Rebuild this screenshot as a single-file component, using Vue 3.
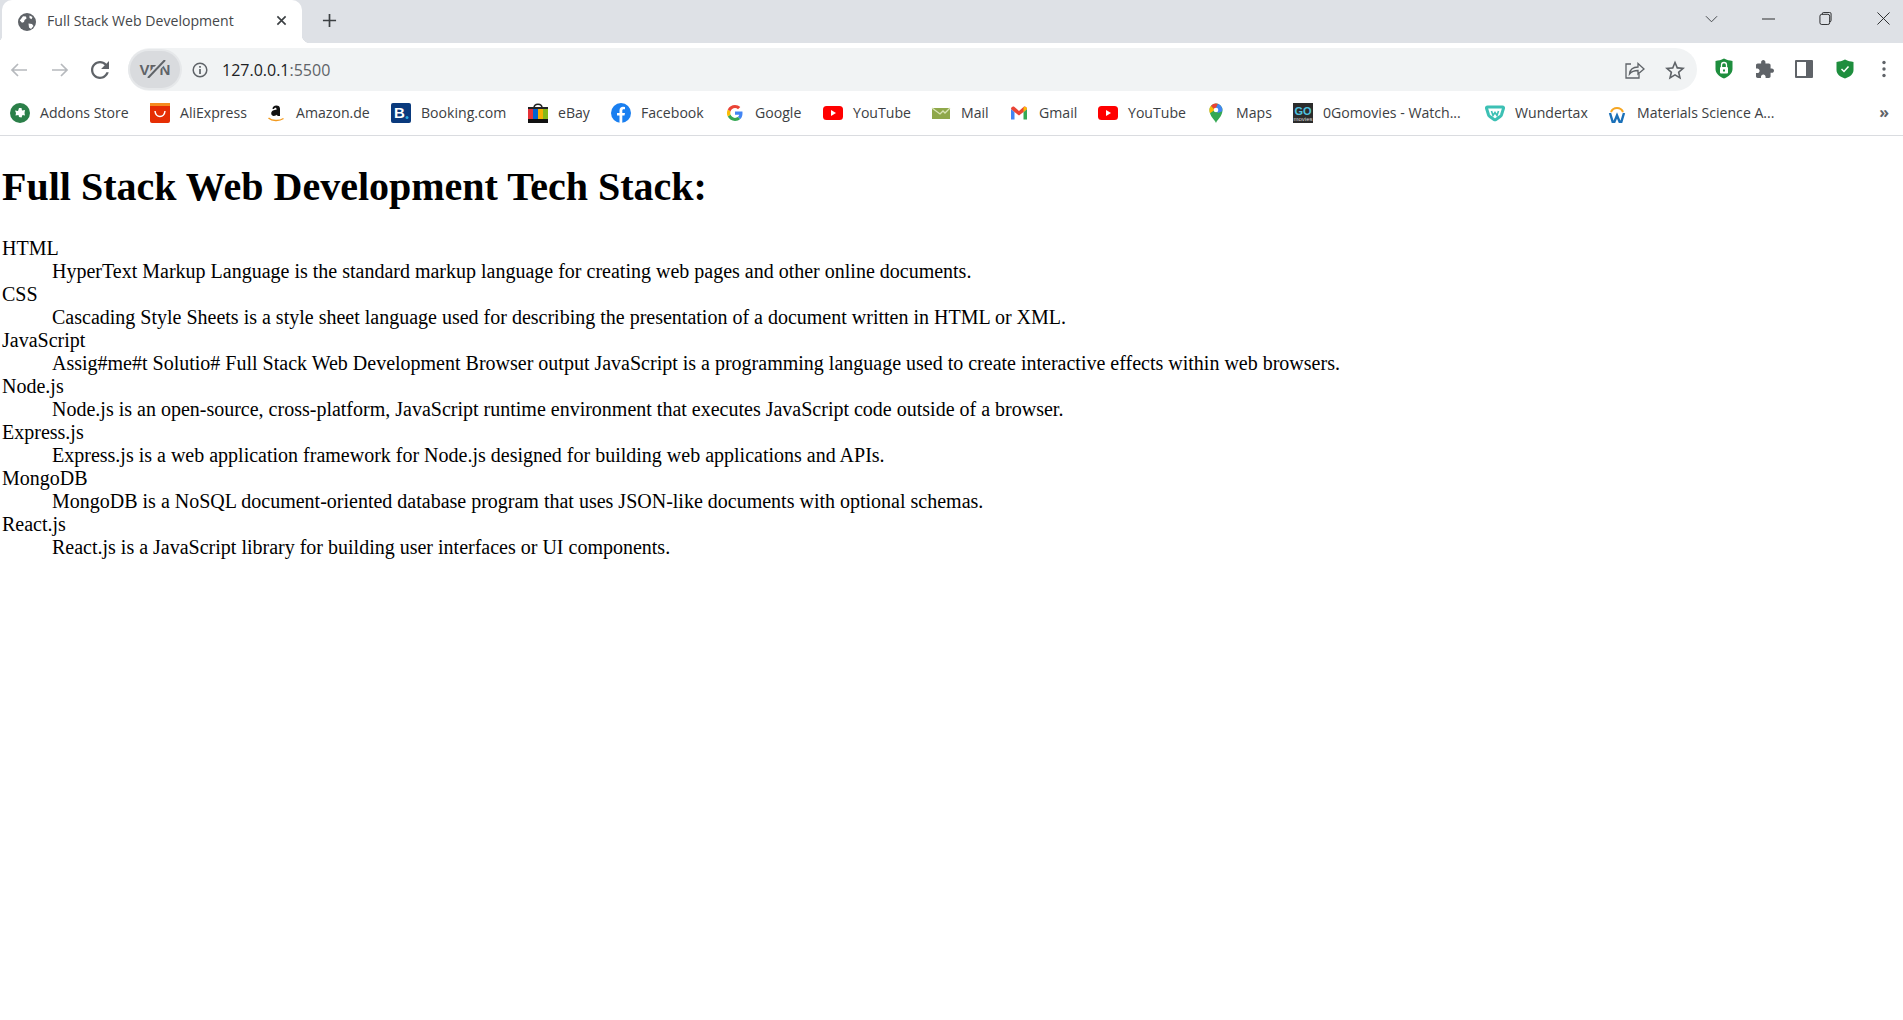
<script setup>
const bookmarks = [
  { icon: 'addons', label: 'Addons Store', width: 140 },
  { icon: 'ali', label: 'AliExpress', width: 116 },
  { icon: 'amazon', label: 'Amazon.de', width: 125 },
  { icon: 'booking', label: 'Booking.com', width: 137 },
  { icon: 'ebay', label: 'eBay', width: 83 },
  { icon: 'facebook', label: 'Facebook', width: 114 },
  { icon: 'google', label: 'Google', width: 98 },
  { icon: 'youtube', label: 'YouTube', width: 108 },
  { icon: 'mail', label: 'Mail', width: 78 },
  { icon: 'gmail', label: 'Gmail', width: 89 },
  { icon: 'youtube', label: 'YouTube', width: 108 },
  { icon: 'maps', label: 'Maps', width: 87 },
  { icon: 'go', label: '0Gomovies - Watch...', width: 192 },
  { icon: 'wunder', label: 'Wundertax', width: 122 },
  { icon: 'work', label: 'Materials Science A...', width: 172 },
]
const terms = [
  ['HTML', 'HyperText Markup Language is the standard markup language for creating web pages and other online documents.'],
  ['CSS', 'Cascading Style Sheets is a style sheet language used for describing the presentation of a document written in HTML or XML.'],
  ['JavaScript', 'Assig#me#t Solutio# Full Stack Web Development Browser output JavaScript is a programming language used to create interactive effects within web browsers.'],
  ['Node.js', 'Node.js is an open-source, cross-platform, JavaScript runtime environment that executes JavaScript code outside of a browser.'],
  ['Express.js', 'Express.js is a web application framework for Node.js designed for building web applications and APIs.'],
  ['MongoDB', 'MongoDB is a NoSQL document-oriented database program that uses JSON-like documents with optional schemas.'],
  ['React.js', 'React.js is a JavaScript library for building user interfaces or UI components.'],
]
</script>

<template>
  <div class="window">
    <header class="tabstrip">
      <div class="tab">
        <svg class="favicon" viewBox="0 0 18 18"><circle cx="9" cy="9" r="9" fill="#5f6368"/><path d="M1.800 7.500L5 3.200l3 .3.500 2-2 1.500-.5 2-2 .8zM10.500 10.500l3.500.5 1.500 2-2.500 3-2-1.500zM11.500 2.500l3 1.500-1 2.200-2-1.200z" fill="#fff"/></svg>
        <span class="tab-title">Full Stack Web Development</span>
        <svg class="tab-close" viewBox="0 0 12 12"><path d="M1.500 1.500l9 9M10.500 1.500l-9 9" stroke="#3c4043" stroke-width="1.800"/></svg>
      </div>
      <svg class="new-tab" viewBox="0 0 16 16"><path d="M8 1v14M1 8h14" stroke="#3c4043" stroke-width="1.800"/></svg>
      <div class="spacer"></div>
      <svg class="win-btn chevron" viewBox="0 0 14 8"><path d="M1 1l6 6 6-6" fill="none" stroke="#3c4043" stroke-width="1"/></svg>
      <svg class="win-btn minimize" viewBox="0 0 14 2"><path d="M0 1h14" stroke="#202124" stroke-width="1"/></svg>
      <svg class="win-btn restore" viewBox="0 0 14 14"><path d="M3.500 2.500V2a1.500 1.500 0 0 1 1.500-1.500h6.500A1.500 1.500 0 0 1 13 2v7a1.500 1.500 0 0 1-1.500 1.500H11" fill="none" stroke="#202124"/><rect x="1" y="2.500" width="10.500" height="11" rx="2" fill="none" stroke="#202124"/></svg>
      <svg class="win-btn close" viewBox="0 0 14 14"><path d="M.5.500l13 13M13.500.500l-13 13" stroke="#202124" stroke-width="1"/></svg>
    </header>

    <div class="toolbar">
      <svg class="nav back" viewBox="0 0 18 16"><path d="M17 8H2M8 2L2 8l6 6" fill="none" stroke="#b6b9bd" stroke-width="1.700"/></svg>
      <svg class="nav forward" viewBox="0 0 18 16"><path d="M1 8h15M10 2l6 6-6 6" fill="none" stroke="#b6b9bd" stroke-width="1.700"/></svg>
      <svg class="nav reload" viewBox="4 4 16 16"><path fill="#5f6368" d="M17.650 6.350C16.200 4.900 14.210 4 12 4c-4.420 0-7.990 3.580-7.990 8s3.570 8 7.990 8c3.730 0 6.840-2.550 7.730-6h-2.080c-.82 2.330-3.040 4-5.650 4-3.310 0-6-2.690-6-6s2.690-6 6-6c1.660 0 3.140.69 4.220 1.780L13 11h7V4l-2.350 2.350z"/></svg>
      <div class="omnibox">
        <div class="vpn">
          <span class="vpn-text">VPN</span>
          <svg class="vpn-slash" viewBox="0 0 20 18"><path d="M19 0L2 18" stroke="#d9dbde" stroke-width="6"/><path d="M19 0L2 18" stroke="#5f6368" stroke-width="2"/></svg>
        </div>
        <svg class="info" viewBox="0 0 16 16"><circle cx="8" cy="8" r="6.800" fill="none" stroke="#5f6368" stroke-width="1.500"/><path d="M8 7v5M8 4v1.800" stroke="#5f6368" stroke-width="1.700"/></svg>
        <span class="url"><span class="url-host">127.0.0.1</span>:5500</span>
        <div class="spacer"></div>
        <svg class="omni-icon share" viewBox="0 0 20 18"><path d="M6 3H1v14h13v-4" fill="none" stroke="#5f6368" stroke-width="1.300"/><path d="M4.500 13c.5-4 3.500-7 8.500-7V2.500L19 8l-6 5V9.500c-3.500 0-6.500 1-8.500 3.500z" fill="none" stroke="#5f6368" stroke-width="1.300"/></svg>
        <svg class="omni-icon star" viewBox="2 1.500 20 20"><path fill="#5f6368" d="M22 9.240l-7.190-.62L12 2 9.190 8.630 2 9.240l5.460 4.730L5.820 21 12 17.270 18.180 21l-1.630-7.030L22 9.240zM12 15.400l-3.760 2.270 1-4.280-3.320-2.880 4.380-.38L12 6.100l1.710 4.040 4.380.38-3.320 2.880 1 4.280L12 15.400z"/></svg>
      </div>
      <svg class="ext lock" viewBox="0 0 18 21"><path d="M9 .5c3 1.500 5.500 2 8.500 2.500v8c0 4-3.500 7.500-8.500 9.500-5-2-8.500-5.500-8.500-9.500V3C3.500 2.500 6 2 9 .5z" fill="#1e8e3e"/><rect x="5" y="9" width="8" height="6.500" rx="1" fill="#fff"/><path d="M6.500 9V7a2.500 2.500 0 0 1 5 0v2" fill="none" stroke="#fff" stroke-width="1.300"/><rect x="8" y="11.500" width="2" height="2" fill="#1e8e3e"/></svg>
      <svg class="ext puzzle" viewBox="2 1 21 21"><path fill="#5f6368" d="M20.500 11H19V7c0-1.100-.9-2-2-2h-4V3.500C13 2.120 11.880 1 10.500 1S8 2.120 8 3.500V5H4c-1.100 0-1.990.9-1.990 2v3.800H3.500c1.490 0 2.700 1.210 2.700 2.700s-1.210 2.700-2.700 2.700H2V20c0 1.100.9 2 2 2h3.800v-1.500c0-1.490 1.210-2.700 2.700-2.700 1.490 0 2.700 1.210 2.700 2.700V22H17c1.100 0 2-.9 2-2v-4h1.500c1.380 0 2.500-1.120 2.500-2.500S21.880 11 20.500 11z"/></svg>
      <svg class="ext panel" viewBox="0 0 18 18"><rect width="18" height="18" rx="1" fill="#5f6368"/><rect x="2" y="2" width="9" height="14" fill="#fff"/></svg>
      <svg class="ext shield" viewBox="0 0 18 20"><path d="M9 .5C12 2 14.500 2.500 17.500 3v8c0 4-3.500 7-8.500 8.500C4 18 .5 15 .5 11V3C3.500 2.500 6 2 9 .5z" fill="#1e8e3e"/><path d="M5.500 10l2.500 2.500 4.500-5" fill="none" stroke="#fff" stroke-width="1.500"/></svg>
      <svg class="ext dots" viewBox="0 0 4 18"><circle cx="2" cy="2.500" r="1.700" fill="#5f6368"/><circle cx="2" cy="9" r="1.700" fill="#5f6368"/><circle cx="2" cy="15.500" r="1.700" fill="#5f6368"/></svg>
    </div>

    <nav class="bookmarks">
      <div v-for="(b, i) in bookmarks" :key="i" class="bookmark" :style="{ width: b.width + 'px' }">
        <svg class="bm-icon" viewBox="0 0 20 20">
          <template v-if="b.icon === 'addons'">
            <circle cx="10" cy="10" r="10" fill="#2b7f49"/>
            <path d="M9 5h2.500l.5 2.500 3-.5-.5 3 .5 2.500-2.500-.5-1 2.500-2.500-.5-.5-2-3 .5.500-2.500-1-2.500 3 .5z" fill="#fff"/>
          </template>
          <template v-else-if="b.icon === 'ali'">
            <rect width="20" height="20" rx="2" fill="#e62e04"/>
            <rect width="20" height="3" fill="#f68b1f"/>
            <path d="M5 8c.5 4 2.500 5.500 5 5.500S14.500 12 15 8" fill="none" stroke="#fff" stroke-width="1.500"/>
          </template>
          <template v-else-if="b.icon === 'amazon'">
            <path d="M6.500 6c0-2 1.500-3.500 3.800-3.500 2.500 0 3.700 1.200 3.700 3.300v7.200h-2.500l-.5-1.200C9 13.500 5.200 13.600 5.200 10.300c0-2.700 3-3.500 5.300-3.600V6c0-.8-.5-1.200-1.200-1.200-.6 0-1 .4-1.200 1.200z" fill="#111"/>
            <path d="M2.500 15c3.500 3 10.500 3.500 15 .5" fill="none" stroke="#f29a1f" stroke-width="1.500"/>
          </template>
          <template v-else-if="b.icon === 'booking'">
            <rect width="20" height="20" rx="2" fill="#0a3a7d"/>
            <text x="3" y="15" class="logo-b">B</text>
            <circle cx="16" cy="14.500" r="1.500" fill="#29a8e0"/>
          </template>
          <template v-else-if="b.icon === 'ebay'">
            <path d="M6 5c0-5 8-5 8 0" fill="none" stroke="#222" stroke-width="1.500"/>
            <rect y="4" width="20" height="2" fill="#222"/>
            <rect y="6" width="5" height="10" fill="#e53238"/>
            <rect x="5" y="6" width="5" height="10" fill="#0064d2"/>
            <rect x="10" y="6" width="5" height="10" fill="#f5af02"/>
            <rect x="15" y="6" width="5" height="10" fill="#86b817"/>
            <rect y="16" width="20" height="4" fill="#111"/>
          </template>
          <template v-else-if="b.icon === 'facebook'">
            <circle cx="10" cy="10" r="10" fill="#1a7ff0"/>
            <path d="M8.500 20v-7.500H6V10h2.500V7.500C8.500 5 10 3.800 12 3.800l2 .2v2.200h-1.200c-1.200 0-1.500.7-1.500 1.500V10h2.700l-.5 2.500h-2.200V20z" fill="#fff"/>
          </template>
          <template v-else-if="b.icon === 'google'">
            <path d="M17.500 10.200c0-.6 0-1.100-.1-1.700H10v3.200h4.300c-.2 1-.7 1.800-1.600 2.400l2.600 2c1.500-1.400 2.200-3.500 2.200-5.900z" fill="#4285f4"/>
            <path d="M10 18c2.200 0 4-.7 5.300-1.900l-2.600-2c-.7.500-1.600.8-2.700.8-2.100 0-3.900-1.400-4.500-3.300L2.800 13.600C4.100 16.200 6.900 18 10 18z" fill="#34a853"/>
            <path d="M5.500 11.600c-.3-1-.3-2.200 0-3.200L2.800 6.400c-1.100 2.300-1.100 4.900 0 7.200z" fill="#fbbc05"/>
            <path d="M10 5.100c1.200 0 2.200.4 3 1.200l2.300-2.300C13.900 2.700 12.100 2 10 2 6.900 2 4.100 3.800 2.800 6.400l2.700 2C6.100 6.500 7.900 5.100 10 5.100z" fill="#ea4335"/>
          </template>
          <template v-else-if="b.icon === 'youtube'">
            <rect y="3" width="20" height="14" rx="3.500" fill="#f00"/>
            <path d="M8 7l5 3-5 3z" fill="#fff"/>
          </template>
          <template v-else-if="b.icon === 'mail'">
            <rect x="1" y="5" width="18" height="11" fill="#8fa84a"/>
            <path d="M1 5l8 6 3-3 2 2 5-5" fill="none" stroke="#d9e4b5" stroke-width="1.300"/>
          </template>
          <template v-else-if="b.icon === 'gmail'">
            <path d="M2 6v10.500h3.500V9z" fill="#4285f4"/>
            <path d="M14.500 9v7.500H18V6z" fill="#34a853"/>
            <path d="M2 6c0-2 2-3 3.500-2L10 8 14.500 4c1.500-1 3.500 0 3.500 2l-3.500 3L10 12.500 5.500 9z" fill="#ea4335"/>
            <path d="M14.500 4.200V9L18 6c0-2-2-3-3.500-1.800z" fill="#fbbc05"/>
          </template>
          <template v-else-if="b.icon === 'maps'">
            <path d="M10 20c-1-3-6.500-6.500-6.500-13a6.500 6.500 0 0 1 13 0c0 6.500-5.500 10-6.500 13z" fill="#34a853"/>
            <path d="M5 2.800l4 4-5 3.500c-1-2.500-.8-5.500 1-7.500z" fill="#fbbc05"/>
            <path d="M5 2.800A6.500 6.500 0 0 1 12 .8L9 7z" fill="#ea4335"/>
            <path d="M12 .8a6.500 6.500 0 0 1 4.200 7.500L12 10 9 7z" fill="#4285f4"/>
            <circle cx="10" cy="7" r="2.300" fill="#fff"/>
          </template>
          <template v-else-if="b.icon === 'go'">
            <rect width="20" height="20" fill="#2c2c2c"/>
            <text x="10" y="11.500" class="logo-go">GO</text>
            <text x="10" y="17.500" class="logo-mv">movies</text>
          </template>
          <template v-else-if="b.icon === 'wunder'">
            <path d="M2.500 4h15c.8 0 1.200.6 1 1.300l-2 6.500c-.2.6-.5 1-1 1.400l-4.500 3.200c-.6.4-1.400.4-2 0l-4.500-3.200c-.5-.4-.8-.8-1-1.400l-2-6.500c-.2-.7.200-1.300 1-1.300z" fill="none" stroke="#3cc0b4" stroke-width="3"/>
            <path d="M6.500 8l1.500 4.500 2-3 2 3L13.500 8" fill="none" stroke="#3cc0b4" stroke-width="1.600"/>
          </template>
          <template v-else>
            <path d="M4 9a6.500 6.500 0 0 1 12 0" fill="none" stroke="#f5a623" stroke-width="2"/>
            <path d="M3 10l2.700 9h1.600L10 12.500 12.700 19h1.600L17 10" fill="none" stroke="#1a70b8" stroke-width="2.400"/>
          </template>
        </svg>
        <span class="bm-label">{{ b.label }}</span>
      </div>
      <div class="spacer"></div>
      <span class="more">»</span>
    </nav>

    <main class="page">
      <h1>Full Stack Web Development Tech Stack:</h1>
      <dl>
        <template v-for="t in terms" :key="t[0]">
          <dt>{{ t[0] }}</dt>
          <dd>{{ t[1] }}</dd>
        </template>
      </dl>
    </main>
  </div>
</template>

<style>
html, body { margin: 0; background: #fff; }
</style>

<style scoped>
.window { height: 1020px; overflow: hidden; background: #fff; display: flex; flex-direction: column; }
.spacer { flex: 1; }
svg { display: block; flex: none; }

.tabstrip { height: 43px; background: #dee1e6; display: flex; align-items: center; flex: none; }
.tab { position: relative; width: 300px; height: 43px; margin-left: 2px; box-sizing: border-box; padding: 0 15px 0 16px; background: #fff; border-radius: 10px 10px 0 0; display: flex; align-items: center; }
.tab::before, .tab::after { content: ""; position: absolute; bottom: 0; width: 8px; height: 8px; }
.tab::before { left: -8px; background: radial-gradient(circle at 0 0, transparent 8px, #fff 8.500px); }
.tab::after { right: -8px; background: radial-gradient(circle at 100% 0, transparent 8px, #fff 8.500px); }
.favicon { width: 18px; height: 18px; }
.tab-title { font: 14.100px "Open Sans", sans-serif; color: #45474a; margin-left: 11px; margin-top: -3px; flex: 1; white-space: nowrap; }
.tab-close { width: 11px; height: 11px; margin-top: -3px; }
.new-tab { width: 15px; height: 15px; margin: -3px 0 0 20px; }
.win-btn.chevron { width: 13px; height: 8px; margin-top: -6px; }
.win-btn.minimize { width: 13px; height: 2px; margin: -6px 0 0 44px; }
.win-btn.restore { width: 13px; height: 13px; margin: -6px 0 0 44px; }
.win-btn.close { width: 13px; height: 13px; margin: -6px 13px 0 45px; }

.toolbar { height: 48px; box-sizing: border-box; padding-top: 5px; display: flex; align-items: center; flex: none; background: #fff; }
.nav.back { width: 18px; height: 16px; margin-left: 10px; }
.nav.forward { width: 18px; height: 16px; margin-left: 23px; }
.nav.reload { width: 18px; height: 18px; margin-left: 22px; }
.omnibox { width: 1569px; height: 43px; margin-left: 19px; border-radius: 22px; background: #f1f3f4; display: flex; align-items: center; }
.vpn { position: relative; width: 50px; height: 37px; border-radius: 19px; background: #d9dbde; box-shadow: 0 0 0 2px #e6e8ea; margin-left: 2px; display: flex; align-items: center; justify-content: center; }
.vpn-text { font: bold 15px "Liberation Sans", sans-serif; color: #5f6368; }
.vpn-slash { position: absolute; left: 16px; top: 9px; width: 20px; height: 18px; }
.info { width: 16px; height: 16px; margin-left: 12px; }
.url { font: 16px "Open Sans", sans-serif; color: #5f6368; margin-left: 14px; }
.url-host { color: #202124; }
.omni-icon.share { width: 20px; height: 18px; }
.omni-icon.star { width: 20px; height: 20px; margin: 0 12px 0 20px; }
.ext { margin-top: -2px; }
.ext.lock { width: 18px; height: 21px; margin-left: 18px; }
.ext.puzzle { width: 18px; height: 18px; margin-left: 23px; }
.ext.panel { width: 18px; height: 18px; margin-left: 21px; }
.ext.shield { width: 18px; height: 20px; margin-left: 23px; }
.ext.dots { width: 4px; height: 18px; margin-left: 28px; }

.bookmarks { height: 45px; box-sizing: border-box; border-bottom: 1px solid #dadce0; display: flex; align-items: center; flex: none; padding-left: 10px; }
.bookmark { display: flex; align-items: center; flex: none; height: 20px; }
.bm-icon { width: 20px; height: 20px; }
.bm-label { font: 14.100px "Open Sans", sans-serif; color: #3c4043; margin: -2px 0 0 10px; white-space: nowrap; }
.logo-b { font: bold 15px "Liberation Sans", sans-serif; fill: #fff; }
.logo-go { font: bold 11px "Liberation Sans", sans-serif; fill: #4fc3e0; text-anchor: middle; }
.logo-mv { font: 6px "Liberation Sans", sans-serif; fill: #ddd; text-anchor: middle; }
.more { font: bold 16px "Open Sans", sans-serif; color: #5f6368; margin: -2px 14px 0 0; }

.page { font: 20px/23px "Liberation Serif", serif; color: #000; padding: 0 2px; }
h1 { font: bold 40px/46px "Liberation Serif", serif; margin: 28px 0 27px; }
dl { margin: 0; }
dd { margin: 0 0 0 50px; }
</style>
